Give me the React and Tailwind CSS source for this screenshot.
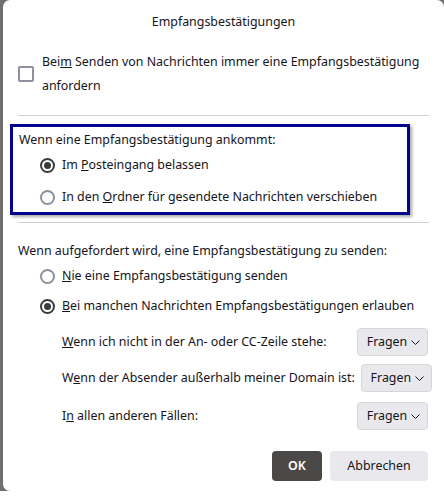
import React from "react";

function Radio({ checked }) {
    return (
        <span
            className={
                "flex h-[15px] w-[15px] shrink-0 items-center justify-center rounded-full border-2 " +
                (checked ? "border-[#3b3b3b]" : "border-[#8f8f9d]")
            }
        >
            {checked && <span className="h-[7px] w-[7px] rounded-full bg-[#3b3b3b]" />}
        </span>
    );
}

function Select({ value }) {
    return (
        <button className="flex h-[28px] w-[71px] shrink-0 items-center justify-center gap-[4px] rounded-[4px] border border-[#d6d6d6] bg-[#e9e9ed] pl-[2px] text-[#15141a]">
            <span>{value}</span>
            <svg width="9" height="5" viewBox="0 0 9 5" fill="none">
                <path d="M0.5 0.5 L4.5 4.5 L8.5 0.5" stroke="#15141a" strokeWidth="1" />
            </svg>
        </button>
    );
}

export default function App() {
    const font = { fontFamily: '"Noto Sans", "Open Sans", sans-serif' };
    return (
        <div className="h-[496px] w-[444px] overflow-hidden bg-white" style={font}>
            <div className="h-[491px] bg-[#6f6f6f] pl-[3px]">
                <div className="flex h-full flex-col rounded-l-[7px] rounded-tr-[7px] bg-white text-[12.4px] text-[#15141a]">
                    <div className="pt-[12px] text-center leading-[20px]">Empfangsbestätigungen</div>

                    {/* Request receipts checkbox */}
                    <div className="mt-[18px] flex items-center pl-[15px]">
                        <span className="h-[16px] w-[16px] shrink-0 rounded-[2px] border-2 border-[#8f8f9d]" />
                        <div className="ml-[8px] whitespace-nowrap leading-[24px]">
                            Bei<u>m</u> Senden von Nachrichten immer eine Empfangsbestätigung
                            <br />
                            anfordern
                        </div>
                    </div>

                    <div className="mx-[15px] mt-[17px] h-px bg-[#cfcfd8]" />

                    {/* Incoming receipts */}
                    <div className="mt-[8px]">
                        <div className="ml-[7px] mr-[34px] border-[3px] border-[#03038c] pb-[5px] pl-[6px] pt-[3px] shadow-[2px_2px_3px_rgba(0,0,0,0.35)]">
                            <div className="leading-[20px]">Wenn eine Empfangsbestätigung ankommt:</div>
                            <div className="mt-[5px] flex flex-col gap-[12px] pl-[21px]">
                                <label className="flex items-center gap-[7px] leading-[20px]">
                                    <Radio checked />
                                    <span>
                                        Im <u>P</u>osteingang belassen
                                    </span>
                                </label>
                                <label className="flex items-center gap-[7px] leading-[20px]">
                                    <Radio />
                                    <span>
                                        In den <u>O</u>rdner für gesendete Nachrichten verschieben
                                    </span>
                                </label>
                            </div>
                        </div>
                        <div className="mx-[15px] mt-[7px] h-px bg-[#cfcfd8]" />
                    </div>

                    {/* Sending receipts */}
                    <div className="mt-[18px] pl-[15px] leading-[20px]">
                        Wenn aufgefordert wird, eine Empfangsbestätigung zu senden:
                    </div>
                    <div className="mt-[5px] flex flex-col gap-[10px] pl-[37px]">
                        <label className="flex items-center gap-[7px] leading-[20px]">
                            <Radio />
                            <span>
                                <u>N</u>ie eine Empfangsbestätigung senden
                            </span>
                        </label>
                        <label className="flex items-center gap-[7px] leading-[20px]">
                            <Radio checked />
                            <span>
                                <u>B</u>ei manchen Nachrichten Empfangsbestätigungen erlauben
                            </span>
                        </label>
                    </div>

                    <div className="mt-[12px] flex flex-col gap-[8px] pl-[59px]">
                        <div className="flex items-center gap-[9px]">
                            <span className="min-w-[286px] whitespace-nowrap">
                                <u>W</u>enn ich nicht in der An- oder CC-Zeile stehe:
                            </span>
                            <Select value="Fragen" />
                        </div>
                        <div className="flex items-center gap-[6px]">
                            <span className="min-w-[286px] whitespace-nowrap">
                                W<u>e</u>nn der Absender außerhalb meiner Domain ist:
                            </span>
                            <Select value="Fragen" />
                        </div>
                        <div className="mt-[2px] flex items-center gap-[9px]">
                            <span className="min-w-[286px] whitespace-nowrap">
                                I<u>n</u> allen anderen Fällen:
                            </span>
                            <Select value="Fragen" />
                        </div>
                    </div>

                    {/* Dialog buttons */}
                    <div className="mt-[21px] flex justify-end gap-[8px] pr-[16px]">
                        <button className="h-[30px] w-[50px] rounded-[4px] bg-[#4b4948] font-semibold text-white">
                            OK
                        </button>
                        <button className="h-[30px] w-[98px] rounded-[4px] bg-[#e9e9ed] text-[#15141a]">
                            Abbrechen
                        </button>
                    </div>
                </div>
            </div>
        </div>
    );
}
